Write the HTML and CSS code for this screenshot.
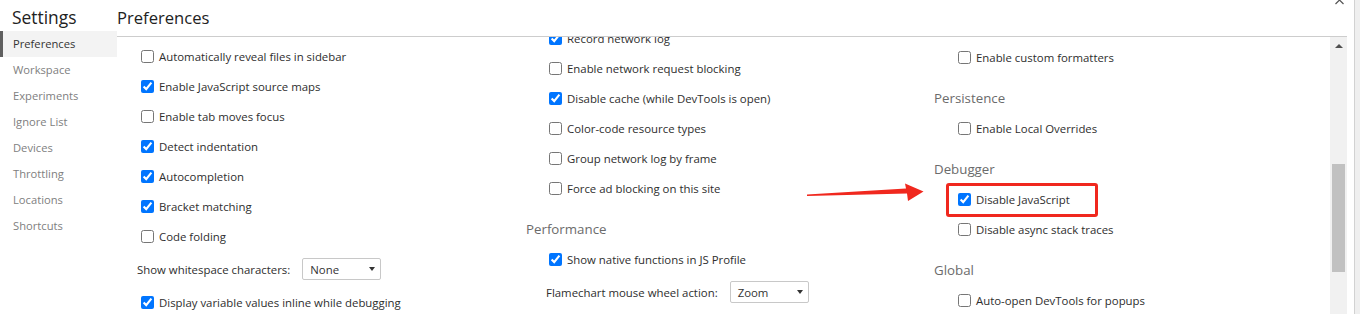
FILE: index.html
```html
<!DOCTYPE html>
<html lang="en">
<head>
<meta charset="utf-8">
<title>Settings - Preferences</title>
<link rel="stylesheet" href="styles.css">
</head>
<body>
<div class="app">
  <aside class="sidebar">
    <div class="sidebar-title">Settings</div>
    <nav class="nav">
      <div class="nav-item selected">Preferences</div>
      <div class="nav-item">Workspace</div>
      <div class="nav-item">Experiments</div>
      <div class="nav-item">Ignore List</div>
      <div class="nav-item">Devices</div>
      <div class="nav-item">Throttling</div>
      <div class="nav-item">Locations</div>
      <div class="nav-item">Shortcuts</div>
    </nav>
  </aside>
  <main class="main">
    <header class="main-header"><h1 class="main-title">Preferences</h1></header>
    <div class="main-body">
      <div class="content">
        <section class="col col1">
          <label class="row"><input type="checkbox"><span>Automatically reveal files in sidebar</span></label>
          <label class="row"><input type="checkbox" checked><span>Enable JavaScript source maps</span></label>
          <label class="row"><input type="checkbox"><span>Enable tab moves focus</span></label>
          <label class="row"><input type="checkbox" checked><span>Detect indentation</span></label>
          <label class="row"><input type="checkbox" checked><span>Autocompletion</span></label>
          <label class="row"><input type="checkbox" checked><span>Bracket matching</span></label>
          <label class="row"><input type="checkbox"><span>Code folding</span></label>
          <div class="select-row"><span>Show whitespace characters:</span><div class="select"><span>None</span><i class="caret"></i></div></div>
          <label class="row"><input type="checkbox" checked><span>Display variable values inline while debugging</span></label>
        </section>
        <section class="col col2">
          <label class="row"><input type="checkbox" checked><span>Record network log</span></label>
          <label class="row"><input type="checkbox"><span>Enable network request blocking</span></label>
          <label class="row"><input type="checkbox" checked><span>Disable cache (while DevTools is open)</span></label>
          <label class="row"><input type="checkbox"><span>Color-code resource types</span></label>
          <label class="row"><input type="checkbox"><span>Group network log by frame</span></label>
          <label class="row"><input type="checkbox"><span>Force ad blocking on this site</span></label>
          <h2 class="block-title">Performance</h2>
          <label class="row"><input type="checkbox" checked><span>Show native functions in JS Profile</span></label>
          <div class="select-row"><span>Flamechart mouse wheel action:</span><div class="select"><span>Zoom</span><i class="caret"></i></div></div>
        </section>
        <section class="col col3">
          <label class="row"><input type="checkbox"><span>Enable custom formatters</span></label>
          <h2 class="block-title">Persistence</h2>
          <label class="row"><input type="checkbox"><span>Enable Local Overrides</span></label>
          <h2 class="block-title">Debugger</h2>
          <label class="row"><input type="checkbox" checked><span>Disable JavaScript</span></label>
          <label class="row"><input type="checkbox"><span>Disable async stack traces</span></label>
          <h2 class="block-title">Global</h2>
          <label class="row"><input type="checkbox"><span>Auto-open DevTools for popups</span></label>
        </section>
      </div>
      <div class="scrollbar">
        <div class="sb-button"><i class="sb-up"></i></div>
        <div class="sb-thumb"></div>
      </div>
    </div>
  </main>
  <div class="edge"></div>
</div>

<svg class="close-x" width="12" height="6" viewBox="0 0 12 6" aria-hidden="true"><polyline points="1.5,4 5.5,0 9.5,4" fill="none" stroke="#555" stroke-width="1.2"/></svg>
<svg class="annot-arrow" width="130" height="28" viewBox="0 0 130 28" aria-hidden="true"><polygon points="7,16.5 106,10.5 105,5.5 123.5,13.5 108,23 107,15.5 7,18" fill="#f0281e"/></svg>
<div class="annot-box"></div>
</body>
</html>
```

FILE: styles.css
```css
* { box-sizing: border-box; }
html, body { margin: 0; padding: 0; }
body {
  width: 1360px;
  height: 314px;
  overflow: hidden;
  background: #fff;
  font-family: "Open Sans", "Noto Sans", sans-serif;
  font-size: 11.4px;
  color: #2e2e2e;
  position: relative;
}
.app { display: flex; height: 314px; }

/* Sidebar */
.sidebar { width: 117px; flex: none; }
.sidebar-title {
  height: 31px;
  padding-left: 12px;
  font-size: 17.4px;
  line-height: 34px;
  color: #222;
}
.nav { display: flex; flex-direction: column; }
.nav-item {
  height: 26px;
  line-height: 26px;
  padding-left: 13px;
  color: #808080;
  font-size: 11.2px;
}
.nav-item.selected {
  background: #f3f3f3;
  color: #333;
  border-left: 3px solid #5f5f5f;
  padding-left: 10px;
}

/* Main */
.main { width: 1230px; flex: none; display: flex; flex-direction: column; }
.main-header { height: 37px; border-bottom: 1px solid #cdcdcd; }
.main-title {
  margin: 0;
  font-weight: 400;
  font-size: 16.6px;
  line-height: 36px;
  color: #222;
}
.main-body { display: flex; height: 277px; }
.content { flex: 1; display: flex; overflow: hidden; }
.col { flex: none; display: flex; flex-direction: column; }
.col1 { width: 409px; padding: 4px 0 0 24px; }
.col2 { width: 408px; margin-top: -14px; padding-left: 23px; }
.col2 .block-title, .col2 .select-row { margin-left: -23px; }
.col2 .select-row { padding-left: 20px; }
.col3 { flex: 1; padding: 5px 0 0 24px; }
.col3 .block-title { margin-left: -24px; }
.col1 .select-row { margin-left: -24px; }

.row {
  display: flex;
  align-items: center;
  height: 30px;
  flex: none;
  white-space: nowrap;
}
.row input {
  margin: 0 5px 0 0;
  width: 13px;
  height: 13px;
  flex: none;
}
.block-title {
  margin: 0;
  padding: 16px 0 5px;
  height: 41px;
  line-height: 20px;
  font-size: 13.3px;
  font-weight: 400;
  color: #6b6b6b;
  flex: none;
}
.select-row {
  display: flex;
  align-items: center;
  gap: 12px;
  height: 36px;
  padding-left: 20px;
  flex: none;
  white-space: nowrap;
}
.select {
  width: 79px;
  height: 22px;
  border: 1px solid #c8c8c8;
  border-radius: 2px;
  background: #fff;
  display: flex;
  align-items: center;
  padding: 0 5px 0 7px;
  color: #333;
}
.caret {
  margin-left: auto;
  width: 0;
  height: 0;
  border-left: 3.5px solid transparent;
  border-right: 3.5px solid transparent;
  border-top: 4px solid #333;
}

/* Scrollbar */
.scrollbar {
  width: 17px;
  flex: none;
  background: #f1f1f1;
  display: flex;
  flex-direction: column;
  align-items: center;
}
.sb-button { height: 17px; width: 17px; display: flex; align-items: center; justify-content: center; }
.sb-up {
  width: 0;
  height: 0;
  border-left: 4px solid transparent;
  border-right: 4px solid transparent;
  border-bottom: 4px solid #505050;
}
.sb-thumb { width: 13px; height: 108px; margin-top: 110px; background: #c1c1c1; }

.edge {
  flex: 1;
  background: linear-gradient(to right, #fff 0 7px, #d2d2d2 7px 8px, #efefef 8px);
}

/* Overlays */
.close-x { position: absolute; left: 1334px; top: 0; }
.annot-arrow { position: absolute; left: 800px; top: 178px; }
.annot-box {
  position: absolute;
  left: 946px;
  top: 183px;
  width: 152px;
  height: 34px;
  border: 3px solid #f0281e;
  border-radius: 3px;
}
```
